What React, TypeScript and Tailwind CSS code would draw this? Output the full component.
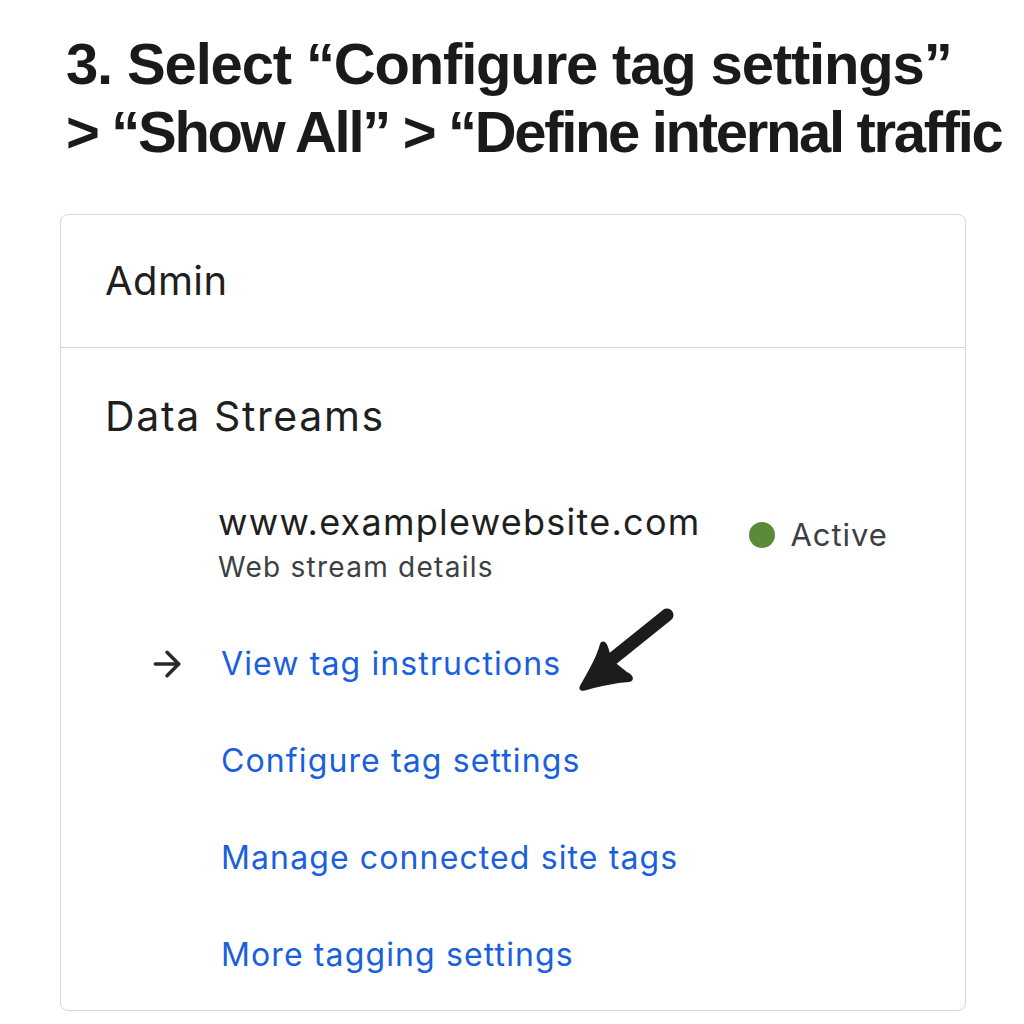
import { ArrowRight } from 'lucide-react'

const links = [
  'View tag instructions',
  'Configure tag settings',
  'Manage connected site tags',
  'More tagging settings',
]

function HandArrow() {
  return (
    <svg
      width="130"
      height="100"
      viewBox="0 0 130 100"
      className="absolute left-[503px] top-[250px]"
    >
      <path d="M103 17 L42 66" stroke="#1c1c1c" strokeWidth="13" strokeLinecap="round" fill="none" />
      <path
        d="M36 46 C33 58 25 72 17 86 C13 92 17 94 23 92 C36 88 52 85 65 84 C71 83 70 77 63 74 L48 62 L44 49 C42 43 38 42 36 46 Z"
        fill="#1c1c1c"
      />
    </svg>
  )
}

export default function App() {
  return (
    <div className="w-[1024px] h-[1024px] bg-white overflow-hidden font-['Inter',sans-serif]">
      <div className="pl-[66px] pt-[30px] font-['Liberation_Sans',Arial,sans-serif] font-bold text-[58px] leading-[68px] text-[#1a1a1a] whitespace-nowrap">
        <div className="tracking-[-0.02em]">3. Select “Configure tag settings”</div>
        <div className="tracking-[-0.04em]">&gt; “Show All” &gt; “Define internal traffic</div>
      </div>

      <div className="ml-[60px] mt-[48px] w-[906px] h-[797px] border border-[#d3d6da] rounded-lg">
        <div className="h-[133px] flex items-center pl-[44px] border-b border-[#d3d6da]">
          <span className="text-[40px] tracking-[0.01em] text-[#1f1f1f]">Admin</span>
        </div>

        <div className="relative">
          <div className="pl-[44px] pt-[44px] text-[41px] leading-[48px] tracking-[0.04em] text-[#1f1f1f]">Data Streams</div>

          <div className="flex items-start mt-[56px]">
            <div className="w-[157px] shrink-0" />
            <div className="flex flex-col">
              <span className="text-[36px] leading-[52px] tracking-[0.035em] text-[#1f1f1f]">www.examplewebsite.com</span>
              <span className="text-[28px] leading-[38px] tracking-[0.045em] text-[#3c4043]">Web stream details</span>
            </div>
            <div className="flex items-center gap-[16px] ml-[48px] mt-[21px]">
              <span className="w-[26px] h-[26px] rounded-full bg-[#5b8a3a]" />
              <span className="text-[31px] leading-[36px] tracking-[0.03em] text-[#3c4043]">Active</span>
            </div>
          </div>

          <div className="flex flex-col mt-[29px]">
            {links.map((l, i) => (
              <div key={l} className="flex items-center h-[97px]">
                <div className="w-[160px] shrink-0 pl-[86px]">
                  {i === 0 && <ArrowRight size={40} strokeWidth={2.1} className="text-[#2a2a2a]" />}
                </div>
                <span className="text-[32px] tracking-[0.035em] text-[#1a5fdc]">{l}</span>
              </div>
            ))}
          </div>

          <HandArrow />
        </div>
      </div>
    </div>
  )
}
